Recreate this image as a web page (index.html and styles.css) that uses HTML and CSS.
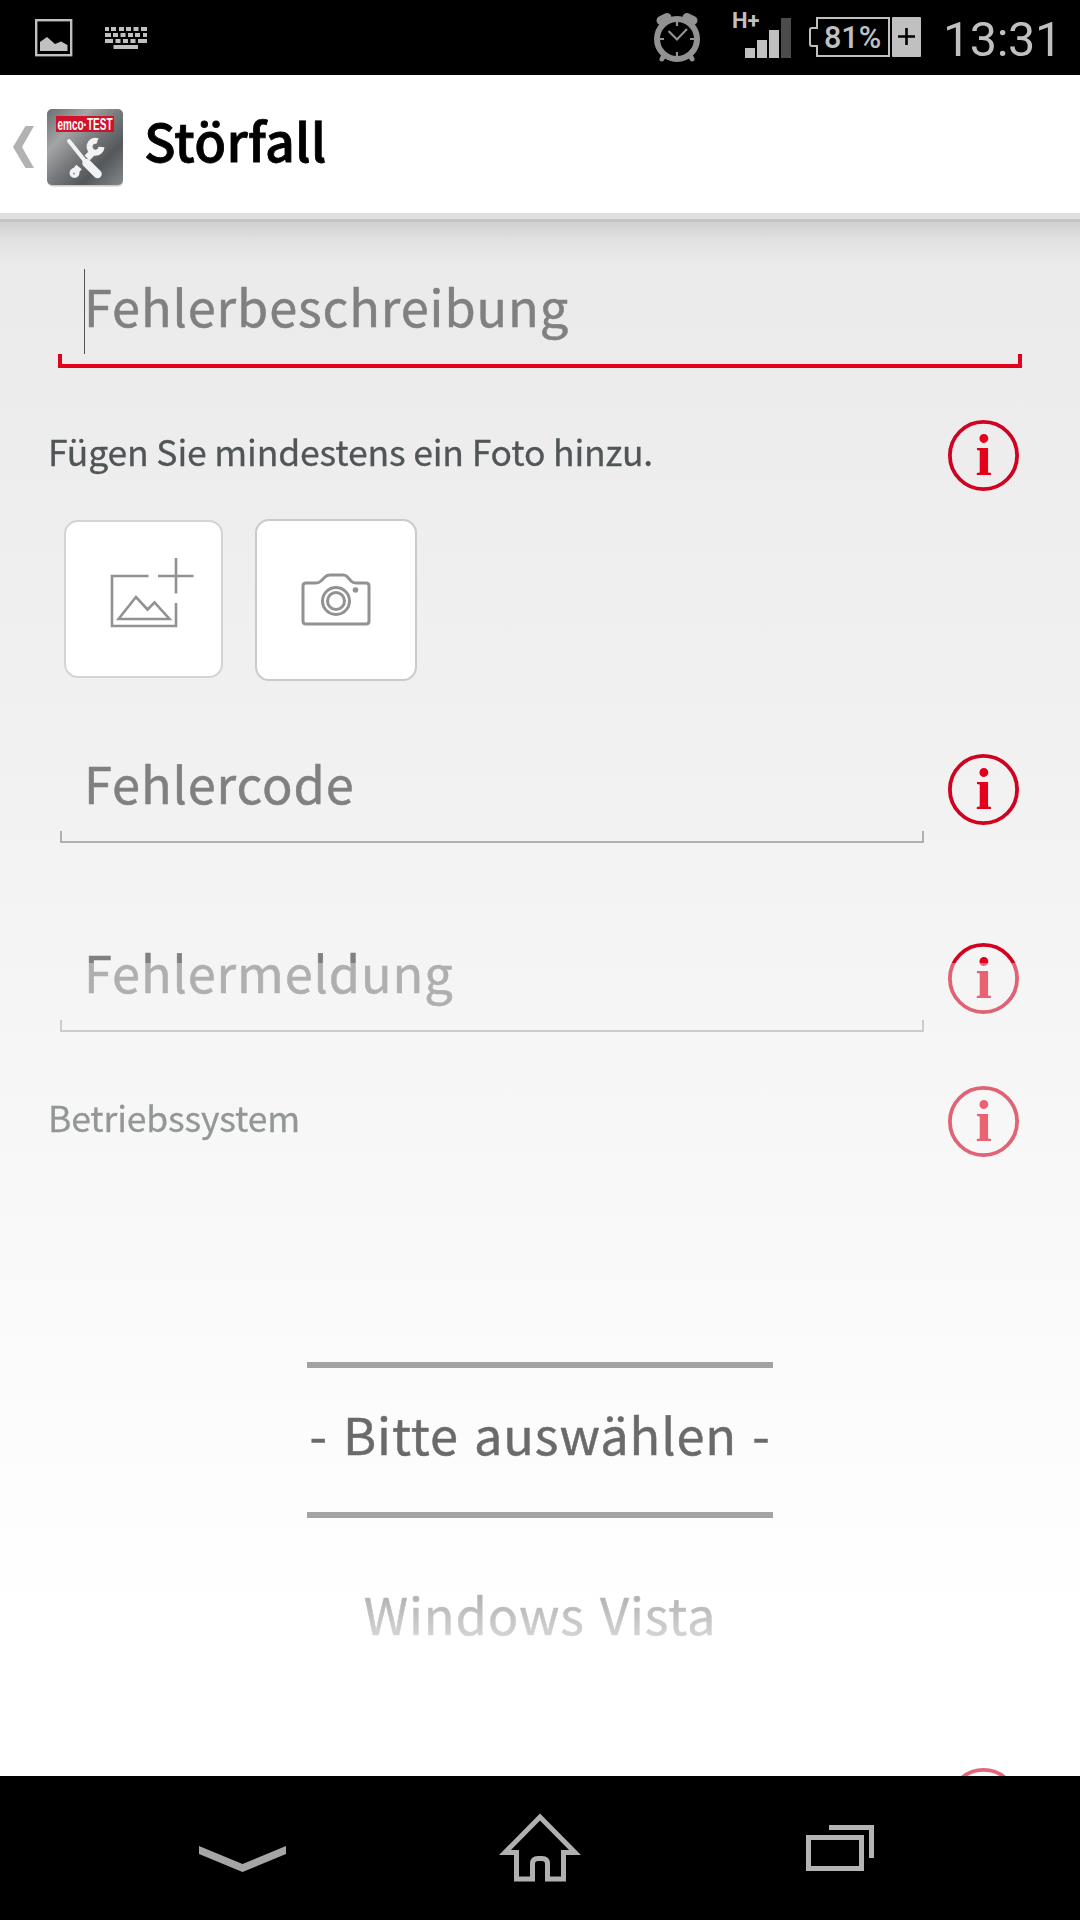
FILE: index.html
```html
<!DOCTYPE html>
<html lang="de">
<head>
  <meta charset="UTF-8">
  <title>Störfall</title>
  <link rel="stylesheet" href="styles.css">
</head>
<body>

  <svg width="0" height="0" class="symbols">
    <symbol id="info" viewBox="0 0 71 71">
      <circle cx="35.5" cy="35.5" r="33.6" fill="none" stroke="#d0021f" stroke-width="3.8"/>
      <text x="35.7" y="55" text-anchor="middle" class="info-letter">i</text>
    </symbol>
  </svg>

  <div class="statusbar">
    <svg class="icon-picture" width="38" height="38" viewBox="0 0 38 38">
      <rect x="1.2" y="1.2" width="35" height="35" fill="none" stroke="#c0c0c0" stroke-width="2.4"/>
      <path d="M5 32V23L12 18L20 25L26 22.5L32.500 26V32Z" fill="#c0c0c0"/>
    </svg>
    <svg class="icon-keyboard" width="42" height="22" viewBox="0 0 42 22">
      <g fill="none" stroke="#c0c0c0" stroke-width="4">
        <path d="M0 2H42" stroke-dasharray="4 2 5 3 5 2 5 2.500 5 2.500 7"/>
        <path d="M0 8H42" stroke-dasharray="6 2 5 2.500 5 2.500 5 2 5 3 4"/>
        <path d="M0 14H42" stroke-dasharray="8 2.500 5 2.500 5 2.500 5 2.500 9"/>
        <path d="M8.500 20H33"/>
      </g>
    </svg>

    <svg class="icon-alarm" width="46" height="50" viewBox="0 0 46 50">
      <g stroke="#929292" fill="none">
        <circle cx="23" cy="26" r="20" stroke-width="6"/>
        <path d="M7 7.500L13 4.500M33 4.500L39 7.500" stroke-width="9" stroke-linecap="round"/>
        <path d="M9 44L8 46M37 44L38 46" stroke-width="5" stroke-linecap="round"/>
        <path d="M14.500 18L23 26.500L33 16M23 9V13M23 39V43M6 26H10M36 26H40" stroke-width="2.200"/>
      </g>
    </svg>
    <svg class="icon-signal" width="60" height="48" viewBox="0 0 60 48">
      <text x="0" y="16" class="net-type">H+</text>
      <path d="M13 36H23V46H13ZM25 28H35V46H25ZM37 18H47V46H37Z" fill="#c0c0c0"/>
      <rect x="49" y="6" width="10" height="40" fill="#4c4c4c"/>
    </svg>
    <svg class="icon-battery" width="112" height="40" viewBox="0 0 112 40">
      <path d="M8 1H80V39H8V29H3Q1 29 1 27V13Q1 11 3 11H8Z" fill="none" stroke="#c0c0c0" stroke-width="2"/>
      <text x="15" y="31" class="battery-text">81%</text>
      <rect x="83" y="0" width="29" height="40" rx="1" fill="#c0c0c0"/>
      <path d="M89 19.500H106M97.500 11V28" stroke="#000" stroke-width="2.600"/>
    </svg>
    <span class="clock">13:31</span>
  </div>

  <header class="actionbar">
    <svg class="icon-back" width="21" height="42" viewBox="0 0 21 42">
      <path d="M12.500 0H21L9 21L21 42H12.500L0 21Z" fill="#b2b2b2"/>
    </svg>
    <svg class="app-icon" width="78" height="80" viewBox="0 0 78 80">
      <defs>
        <linearGradient id="steel" x1="0" y1="0" x2="1" y2="1">
          <stop offset="0" stop-color="#6b6e70"/>
          <stop offset=".28" stop-color="#a3a5a6"/>
          <stop offset=".5" stop-color="#777a7c"/>
          <stop offset=".72" stop-color="#54585a"/>
          <stop offset="1" stop-color="#85888a"/>
        </linearGradient>
      </defs>
      <rect x="0.500" y="1.500" width="75.500" height="76" rx="5" fill="#c9c9c9"/>
      <rect x="0" y="0" width="76" height="76" rx="5" fill="url(#steel)"/>
      <rect x="9" y="7" width="58" height="16" fill="#d2122a"/>
      <text x="10.500" y="21" class="logo-text" textLength="55" lengthAdjust="spacingAndGlyphs">emco·TEST</text>
      <g fill="none" stroke="#f2f2f2">
        <path d="M27 64L32 58M40 49L47 42" stroke-width="7"/>
        <circle cx="27.500" cy="64" r="3.200" stroke-width="3.500"/>
        <path d="M50.500 32A6 6 0 1 0 54.500 38" stroke-width="6"/>
        <path d="M22 32L38 52" stroke-width="4" stroke-linecap="round"/>
        <path d="M39.500 54L50.500 65" stroke-width="8.500" stroke-linecap="round"/>
      </g>
    </svg>
    <h1>Störfall</h1>
  </header>

  <main>
    <div class="form">
      <div class="field focused">
        <div class="input"><i class="caret"></i>Fehlerbeschreibung</div>
        <div class="bracket"></div>
      </div>

      <div class="row photo-label">
        <span class="label">Fügen Sie mindestens ein Foto hinzu.</span>
        <svg class="info"><use href="#info"/></svg>
      </div>

      <div class="photos">
        <div class="photo-btn">
          <svg width="84" height="72" viewBox="0 0 84 72" fill="none" stroke="#929292" stroke-width="2.600">
            <path d="M38.500 19H2V69H66V46M66 36.500V1M48 19H83.500"/>
            <path d="M8.500 62L26 40L37.500 52.500L44.500 45.500L59.500 62Z"/>
          </svg>
        </div>
        <div class="photo-btn camera">
          <svg width="70" height="54" viewBox="0 0 70 54" fill="none" stroke="#929292" stroke-width="3">
            <path d="M4 10H15Q18 10 20 8L24 4Q26 2 29 2H42Q45 2 46.500 4L50 8Q52 10 55 10H65Q68 10 68 13V48Q68 51 65 51H5Q2 51 2 48V13Q2 10 5 10"/>
            <circle cx="35" cy="28" r="13.500"/>
            <circle cx="35" cy="28" r="8.500"/>
            <circle cx="54.500" cy="17" r="2.800" fill="#929292" stroke="none"/>
          </svg>
        </div>
      </div>

      <div class="row code">
        <div class="field">
          <div class="input">Fehlercode</div>
          <div class="bracket"></div>
        </div>
        <svg class="info"><use href="#info"/></svg>
      </div>

      <div class="row message">
        <div class="field">
          <div class="input">Fehlermeldung</div>
          <div class="bracket"></div>
        </div>
        <svg class="info"><use href="#info"/></svg>
      </div>

      <div class="row os-label">
        <span class="label">Betriebssystem</span>
        <svg class="info"><use href="#info"/></svg>
      </div>

      <div class="picker">
        <div class="option selected">- Bitte auswählen -</div>
        <div class="option next">Windows Vista</div>
      </div>

      <div class="row last">
        <svg class="info"><use href="#info"/></svg>
      </div>
    </div>
  </main>

  <nav class="navbar">
    <svg class="nav-back" width="88" height="26" viewBox="0 0 88 26">
      <path d="M0 0L43.500 18L87 0V8L43.500 26L0 8Z" fill="#a6a6a6"/>
    </svg>
    <svg class="nav-home" width="78" height="70" viewBox="0 0 78 70">
      <path d="M39 4L4 39.500H15.500V66H31.500V51Q31.500 45.500 37 45.500H41Q46.500 45.500 46.500 51V66H62.500V39.500H74Z" fill="none" stroke="#b0b0b0" stroke-width="5"/>
    </svg>
    <svg class="nav-recent" width="68" height="46" viewBox="0 0 68 46">
      <g fill="none" stroke="#b4b4b4" stroke-width="5">
        <rect x="2.500" y="12.500" width="53" height="31"/>
        <path d="M23 2.500H65.500V33"/>
      </g>
    </svg>
  </nav>

</body>
</html>
```
FILE: styles.css
```css
* {
  box-sizing: border-box;
}

body {
  margin: 0;
  width: 1080px;
  height: 1920px;
  display: flex;
  flex-direction: column;
  overflow: hidden;
  background: #fff;
  font-family: 'Noto Sans CJK SC', 'Noto Sans', sans-serif;
}

svg {
  display: block;
  flex: none;
  overflow: visible;
}

.symbols {
  position: absolute;
}

/* status bar */
.statusbar {
  height: 75px;
  flex: none;
  display: flex;
  align-items: flex-start;
  background: #000;
  color: #c0c0c0;
  font-family: Roboto, sans-serif;
}

.icon-picture {
  margin: 19px 0 0 35px;
}

.icon-keyboard {
  margin: 27px 0 0 32px;
}

.icon-alarm {
  margin: 13px 0 0 507px;
}

.icon-signal {
  margin: 12px 0 0 32px;
}

.icon-battery {
  margin: 17px 0 0 17px;
}

.net-type {
  font: bold 22px Roboto, sans-serif;
  fill: #c0c0c0;
}

.battery-text {
  font: 500 30.5px Roboto, sans-serif;
  fill: #c0c0c0;
}

.clock {
  margin-left: 22px;
  font-size: 48.5px;
  line-height: 79px;
  letter-spacing: -0.4px;
}

/* action bar */
.actionbar {
  height: 147px;
  flex: none;
  display: flex;
  align-items: flex-start;
  background: #fff;
  border-bottom: 3px solid #c4c4c4;
  box-shadow: inset 0 -6px #dfdfdf;
}

.icon-back {
  margin: 51px 0 0 13px;
}

.app-icon {
  margin: 34px 0 0 13px;
}

.logo-text {
  font: bold 16px 'Liberation Sans', sans-serif;
  fill: #fff;
}

h1 {
  margin: 0 0 0 19px;
  font-size: 52px;
  font-weight: 500;
  line-height: 130px;
  letter-spacing: 0.2px;
  color: #000;
  -webkit-text-stroke: 0.8px;
}

/* form */
main {
  flex: 1;
  min-height: 0;
  overflow: hidden;
  background:
    linear-gradient(rgba(0, 0, 0, 0.11), rgba(0, 0, 0, 0.03) 20px, transparent 45px),
    linear-gradient(#eaeaea, #f2f2f2 38%, #fff 90%);
}

.form {
  height: 1554px;
  overflow: hidden;
  padding: 47px 58px 0 50px;
  /* lower part is disabled and shows faded */
  -webkit-mask-image: linear-gradient(#000 741px, rgba(0, 0, 0, 0.6) 741px);
  mask-image: linear-gradient(#000 741px, rgba(0, 0, 0, 0.6) 741px);
}

.field {
  width: 864px;
  margin-left: 10px;
}

.input {
  height: 85px;
  padding-left: 25px;
  font-size: 50.5px;
  line-height: 72px;
  letter-spacing: 0.9px;
  color: #808080;
  white-space: nowrap;
  -webkit-text-stroke: 0.5px;
}

.bracket {
  height: 12px;
  border: 2px solid #b0b0b0;
  border-top: none;
}

.focused {
  width: 964px;
  margin-left: 8px;
}

.focused .input {
  position: relative;
  padding-left: 26px;
}

.focused .bracket {
  height: 14px;
  border: 4px solid #e2001a;
  border-top: none;
}

.caret {
  position: absolute;
  left: 26px;
  top: 0;
  width: 1px;
  height: 85px;
  background: #555;
}

.row {
  display: flex;
  justify-content: space-between;
  align-items: flex-start;
  padding-right: 3px;
}

.label {
  margin-left: -2px;
  font-size: 35.5px;
  line-height: 61px;
  letter-spacing: -0.15px;
  color: #505658;
  -webkit-text-stroke: 0.3px;
}

.info {
  width: 71px;
  height: 71px;
}

.info-letter {
  font: bold 59px 'Liberation Serif', serif;
  fill: #e2001a;
}

.photo-label {
  margin-top: 52px;
}

.photos {
  display: flex;
  align-items: flex-start;
  gap: 32px;
  margin: 28px 0 0 14px;
  height: 162px;
}

.photo-btn {
  width: 159px;
  height: 158px;
  margin-top: 1px;
  padding: 35px 0 0 44px;
  background: #fff;
  border: 2px solid #d4d4d4;
  border-radius: 14px;
}

.photo-btn.camera {
  width: 162px;
  height: 162px;
  margin-top: 0;
  padding: 52px 0 0 44px;
  border-color: #cacaca;
}

.code {
  margin-top: 65px;
}

.message {
  margin-top: 92px;
}

.code .field,
.message .field {
  flex: none;
}

.code .info,
.message .info {
  margin-top: 8px;
}

.code .field .input,
.message .field .input {
  padding-left: 24px;
}

.os-label {
  margin-top: 54px;
}

.picker {
  width: 466px;
  margin: 205px 0 0 257px;
  text-align: center;
  font-size: 50.5px;
  letter-spacing: 0.9px;
  word-spacing: 3px;
  white-space: nowrap;
  -webkit-text-stroke: 0.5px;
}

.selected {
  height: 156px;
  line-height: 130px;
  border: solid #646869;
  border-width: 6px 0;
  color: #080808;
}

.next {
  margin-top: 59px;
  height: 72px;
  line-height: 72px;
  color: transparent;
  background: linear-gradient(#808080 20px, #b8b8b8 60px);
  -webkit-background-clip: text;
  background-clip: text;
}

.last {
  justify-content: flex-end;
  margin-top: 119px;
}

/* navigation bar */
.navbar {
  height: 144px;
  flex: none;
  display: flex;
  align-items: flex-start;
  background: #000;
}

.nav-back {
  margin: 70px 0 0 199px;
}

.nav-home {
  margin: 37px 0 0 214px;
}

.nav-recent {
  margin: 49px 0 0 227px;
}
```
